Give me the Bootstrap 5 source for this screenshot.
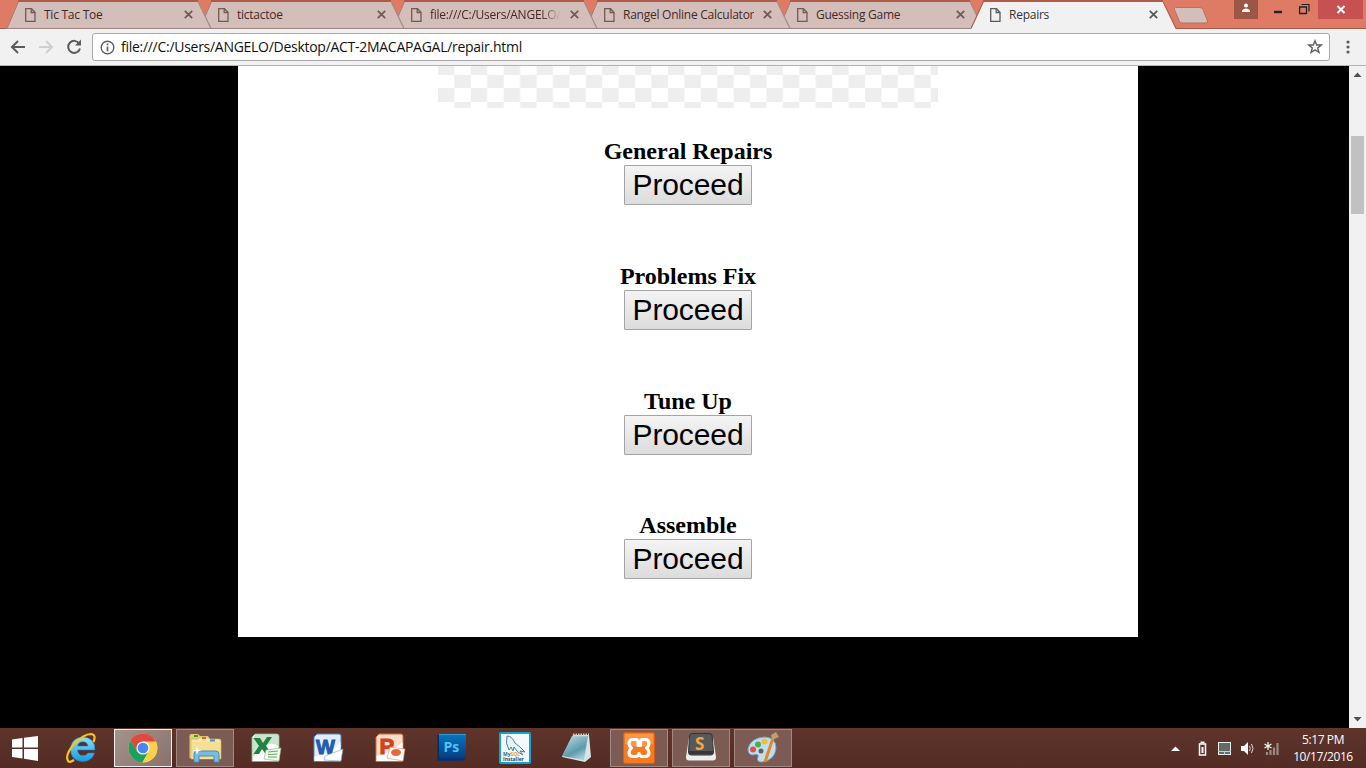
<!DOCTYPE html>
<html lang="en">
<head>
<meta charset="utf-8">
<meta name="viewport" content="width=device-width, initial-scale=1">
<title>Repairs</title>
<link href="https://cdn.jsdelivr.net/npm/bootstrap@5.3.0/dist/css/bootstrap.min.css" rel="stylesheet">
<style>
  body{width:1366px;height:768px;font-family:"Open Sans","Noto Sans",sans-serif;background:#000}
  svg{display:block;flex:none}
  .strip{height:29px;background:#df7b64;border-top:1px solid #df7b64;padding-left:7px}
  .strip::after{content:"";position:absolute;left:0;right:0;bottom:0;height:1px;background:#a25b4b}
  .tab{width:193px;height:29px;margin-top:-1px;position:relative}
  .tab .shape{position:absolute;left:-1px;top:0}
  .tab-body{position:relative;height:29px;padding:0 7px 0 18px}
  .tab-name{width:131px;margin-left:8px;font-size:12px;line-height:29px;letter-spacing:-.25px;white-space:nowrap;overflow:hidden;color:#44292a}
  .tab.active .tab-name{color:#333}
  .fade-end{-webkit-mask-image:linear-gradient(90deg,#000 85%,transparent)}
  .toolbar{height:37px;background:#f2f1f2;border-bottom:1px solid #b5b3b4;padding:4px 12px 4px 10px}
  .address{width:1238px;height:28px;margin-left:10px;border:1px solid #a9a7a8;border-radius:3px;padding:0 6px 0 7px;font-size:14px;color:#111}
  .address span{letter-spacing:-.28px;margin-left:6px;line-height:26px}
  .viewport{height:662px}
  .sheet{width:900px;height:571px;margin-left:238px;font-family:"Liberation Serif",serif;color:#000}
  .service{height:124.8px}
  .service h2{font-size:24px;line-height:27px;font-weight:700;margin:0}
  .btn-go{width:128px;height:40px;padding:0;border:1px solid #a4a4a4;border-radius:1px;background:linear-gradient(#f4f4f4,#dcdcdc);font:30px/36px "Liberation Sans",sans-serif;letter-spacing:-.1px;color:#000}
  .scroll{width:17px;background:#f1f1f1}
  .thumb{width:13px;height:78px;background:#c1c1c1;margin-top:53px}
  .taskbar{height:40px;background:linear-gradient(#5e342b,#542c24);color:#fff}
  .start{width:52px}
  .slot{width:58px;height:38px;margin-right:4px}
  .slot.office{padding-right:2px}
  .slot.open{background:#7b5b53;border:1px solid #a28880}
  .slot.current{background:linear-gradient(135deg,#a3938e,#8a7169);border:1px solid #f2efee}
  .clock{width:70px;font-size:12px;line-height:17px;letter-spacing:-.4px;text-align:center}
  .win-close{width:45px;height:19px;background:#c75050}
  .user{width:24px;height:19px;background:#9c5646}
  .controls{position:absolute;left:1234px;top:-1px}
</style>
<script src="https://cdn.jsdelivr.net/npm/bootstrap@5.3.0/dist/js/bootstrap.bundle.min.js"></script>
</head>
<body class="overflow-hidden d-flex flex-column">
<svg width="0" height="0" class="position-absolute">
  <defs>
    <g id="tabshape"><path d="M1 28.5 L12.5 1.5 H192 L205 28.5Z" fill="#d4beb9"/><path d="M0 28.5H205" stroke="#9d8580"/><path d="M1 28.5 L12.5 1.5" fill="none" stroke="#a77a70"/><path d="M12 1H192" stroke="#b05b4a" stroke-width="2"/><path d="M192 1.5 L205 28.5" fill="none" stroke="#a58a84" stroke-width="1.2"/></g>
    <g id="doc" fill="none" stroke="currentColor" stroke-width="1.3"><path d="M.7.7H6.5L10 4.2V13.3H.7Z"/><path d="M6.2.8V4.5H10"/></g>
    <path id="cross" d="M.8.8 8.2 8.2M8.2.8.8 8.2" stroke="currentColor" stroke-width="1.8"/>
  </defs>
</svg>

<header class="strip d-flex position-relative flex-shrink-0">
  <div class="tab" style="z-index:5"><svg class="shape" width="207" height="29"><use href="#tabshape"/></svg><div class="tab-body d-flex align-items-center" style="color:#735a57"><svg width="11" height="14"><use href="#doc"/></svg><span class="tab-name">Tic Tac Toe</span><svg class="ms-auto" width="9" height="9"><use href="#cross"/></svg></div></div>
  <div class="tab" style="z-index:4"><svg class="shape" width="207" height="29"><use href="#tabshape"/></svg><div class="tab-body d-flex align-items-center" style="color:#735a57"><svg width="11" height="14"><use href="#doc"/></svg><span class="tab-name">tictactoe</span><svg class="ms-auto" width="9" height="9"><use href="#cross"/></svg></div></div>
  <div class="tab" style="z-index:3"><svg class="shape" width="207" height="29"><use href="#tabshape"/></svg><div class="tab-body d-flex align-items-center" style="color:#735a57"><svg width="11" height="14"><use href="#doc"/></svg><span class="tab-name fade-end">file:///C:/Users/ANGELO/</span><svg class="ms-auto" width="9" height="9"><use href="#cross"/></svg></div></div>
  <div class="tab" style="z-index:2"><svg class="shape" width="207" height="29"><use href="#tabshape"/></svg><div class="tab-body d-flex align-items-center" style="color:#735a57"><svg width="11" height="14"><use href="#doc"/></svg><span class="tab-name">Rangel Online Calculator</span><svg class="ms-auto" width="9" height="9"><use href="#cross"/></svg></div></div>
  <div class="tab" style="z-index:1"><svg class="shape" width="207" height="29"><use href="#tabshape"/></svg><div class="tab-body d-flex align-items-center" style="color:#735a57"><svg width="11" height="14"><use href="#doc"/></svg><span class="tab-name">Guessing Game</span><svg class="ms-auto" width="9" height="9"><use href="#cross"/></svg></div></div>
  <div class="tab active" style="z-index:6"><svg class="shape" width="207" height="29"><path d="M0 29 L12.5 1 H192 L205 29Z" fill="#f2f1f2"/><path d="M0 28.5 L12.5 1.5M192 1.5 L205 28.5" stroke="#a86353" stroke-width="1.2"/><path d="M12 1H192" stroke="#b05b4a" stroke-width="2"/></svg><div class="tab-body d-flex align-items-center" style="color:#5a5a5a"><svg width="11" height="14"><use href="#doc"/></svg><span class="tab-name">Repairs</span><svg class="ms-auto" width="9" height="9"><use href="#cross"/></svg></div></div>
  <svg width="36" height="20" style="margin:5px 0 0 8px"><path d="M2.500 1.500H27Q29 1.500 30 3.500L34.500 15Q35 17 33 17H9Q7 17 6.200 15L1.500 3.500Q1 1.500 2.500 1.500Z" fill="#d4beb9" stroke="#b57264"/></svg>
  <div class="controls d-flex">
    <div class="user"><svg width="24" height="19"><circle cx="12" cy="5.500" r="2" fill="#fff"/><path d="M8 12V10.500Q12 6.500 16 10.500V12Z" fill="#fff"/></svg></div>
    <svg width="60" height="19"><path d="M16 12H24" stroke="#222" stroke-width="2.400"/><g transform="translate(41 3.500)" fill="none" stroke="#222"><path d="M.6 3.500H7.500V10H.6Z" stroke-width="1.300"/><path d="M2.500 1H10V8" stroke-width="1.200"/></g></svg>
    <div class="win-close"><svg width="45" height="19"><path d="M19.500 6 26.500 13M26.500 6 19.500 13" stroke="#fff" stroke-width="2"/></svg></div>
  </div>
</header>

<nav class="toolbar d-flex align-items-center flex-shrink-0">
  <svg width="72" height="20" fill="none" stroke-width="2"><path d="M15 10H2.500M8 4 2 10 8 16" stroke="#5b5b5b"/><path d="M29 10H41.500M36 4 42 10 36 16" stroke="#cfcfcf"/><path d="M69.200 6.500A6 6 0 1 0 70 11.500" stroke="#5b5b5b"/><path d="M71 2.500V8.500H65Z" fill="#5b5b5b"/></svg>
  <div class="address bg-white d-flex align-items-center">
    <svg width="15" height="15" fill="none" stroke="#5f5f5f"><circle cx="7.500" cy="7.500" r="6.300" stroke-width="1.400"/><path d="M7.500 6.500V11.200M7.500 3.600V5.300" stroke-width="1.700"/></svg>
    <span>file:///C:/Users/ANGELO/Desktop/ACT-2MACAPAGAL/repair.html</span>
    <svg class="ms-auto" width="16" height="16"><path d="M8 1.800 9.700 6H14.200L10.700 9 12 13.500 8 10.900 4 13.500 5.300 9 1.800 6H6.300Z" fill="none" stroke="#5f5f5f" stroke-width="1.400"/></svg>
  </div>
  <svg width="6" height="16" class="ms-auto" style="margin-right:3px"><g fill="#5b5b5b"><circle cx="3" cy="3" r="1.600"/><circle cx="3" cy="8" r="1.600"/><circle cx="3" cy="13" r="1.600"/></g></svg>
</nav>

<div class="viewport d-flex bg-black flex-shrink-0">
  <main class="sheet bg-white text-center">
    <svg class="mx-auto" width="500" height="42"><defs><pattern id="chk" width="32.850" height="27" y="-5" patternUnits="userSpaceOnUse"><path d="M0 0H16.400V14H0ZM16.400 14H32.850V27H16.400Z" fill="#eee"/></pattern></defs><rect width="500" height="42" fill="url(#chk)"/></svg>
    <div style="padding-top:30px">
      <section class="service"><h2>General Repairs</h2><button class="btn btn-go d-block mx-auto">Proceed</button></section>
      <section class="service"><h2>Problems Fix</h2><button class="btn btn-go d-block mx-auto">Proceed</button></section>
      <section class="service"><h2>Tune Up</h2><button class="btn btn-go d-block mx-auto">Proceed</button></section>
      <section class="service"><h2>Assemble</h2><button class="btn btn-go d-block mx-auto">Proceed</button></section>
    </div>
  </main>
  <div class="scroll ms-auto d-flex flex-column align-items-center">
    <svg width="17" height="17"><path d="M4.500 11 8.500 6.500 12.500 11Z" fill="#505050"/></svg>
    <div class="thumb"></div>
    <svg width="17" height="17" class="mt-auto"><path d="M4.500 6 8.500 10.500 12.500 6Z" fill="#505050"/></svg>
  </div>
</div>

<footer class="taskbar d-flex align-items-center flex-shrink-0">
  <div class="start"><svg width="52" height="30"><path d="M12 6.500 22.500 5V14.500H12ZM24 4.800 38 3V14.500H24ZM12 16H22.500V25.500L12 24ZM24 16H38V28L24 25.800Z" fill="#fff"/></svg></div>
  <div class="slot d-flex align-items-center justify-content-center">
    <svg width="32" height="32"><defs><linearGradient id="ie" x2="0" y2="1"><stop stop-color="#8be0fb"/><stop offset="1" stop-color="#1b9ae0"/></linearGradient></defs><path d="M30 18H12.500Q13 23.500 18 23.500 21.500 23.500 23 21H29.500Q27 29.500 17.500 29.500 6 29 5.500 17.500 6 6 17.500 5 30 5.500 30 18ZM12.600 14H23Q22 9.800 18 9.800 13.500 9.800 12.600 14Z" fill="url(#ie)" fill-rule="evenodd" stroke="#1485c8" stroke-width=".6"/><path d="M28.500 10Q31.500 2.500 26 2 19 2 9 12-1 24 3.500 29.500 5.500 30.500 9 28" fill="none" stroke="#f6c51e" stroke-width="2.200"/></svg>
  </div>
  <div class="slot current d-flex align-items-center justify-content-center">
    <svg width="30" height="30" viewBox="0 0 30 30"><circle cx="15" cy="15" r="14.500" fill="#fcd04d"/><path d="M2.440 7.750A14.500 14.500 0 0 0 14.500 29.500L20.500 18.500 15 21 9.400 18.300Z" fill="#1aa260"/><path d="M15 8.500H28Q31 16 27 23 23 29 14.500 29.500L20.800 18Z" fill="#fcd04d"/><path d="M2.440 7.750A14.500 14.500 0 0 1 28 8.500H15L9 18Z" fill="#dc4b3e"/><circle cx="15" cy="15" r="6.600" fill="#f3f3f3"/><circle cx="15" cy="15" r="5.300" fill="#4a86ee"/></svg>
  </div>
  <div class="slot open d-flex align-items-center justify-content-center">
    <svg width="34" height="32"><path d="M1.500 4Q1.500 2 3.500 2H10L12 4H20L22 7V26H1.500Z" fill="#e5cc78"/><path d="M3 7H10L12 5H19L22 7H31Q33 7 33 9V27H3Z" fill="#f8e8a7" stroke="#d2ac4f" stroke-width=".7"/><path d="M4 10H32V27H4Z" fill="#f5df93"/><path d="M6 3H10V5H6Z" fill="#29ad28"/><path d="M14 5H18V7H14Z" fill="#e35a3a"/><path d="M22 7.500H27V9.500H22Z" fill="#3596e4"/><path d="M6 30V22Q6 19 9 19H28Q31 19 31 22V30H26V24H11V30Z" fill="#7abbe2" stroke="#4a8cb9"/><path d="M9 14 10 17.500 13.500 18.500 10 19.500 9 23 8 19.500 4.500 18.500 8 17.500Z" fill="#fff"/></svg>
  </div>
  <div class="slot office d-flex align-items-center justify-content-center">
    <svg width="32" height="32"><path d="M5 2H27Q29 2 29 4V28Q29 29.500 27 29.500H2V5Z" fill="#fff" stroke="#71ae79"/><path d="M5 3H28V14Q18 6 3 25V6Z" fill="#cce3cd"/><path d="M3.500 6H10L13 11 17 5H22L16 14 22 22H15.500L12 17 9 22H3.500L9 14Z" fill="#238442"/><path d="M16 18 31 16 29 29 14 27Z" fill="#f3fbef" stroke="#80b681" stroke-width=".6"/><path d="M18 20 28 19M18 22.500 27.500 22M18 25 27 25" stroke="#64a969"/></svg>
  </div>
  <div class="slot office d-flex align-items-center justify-content-center">
    <svg width="32" height="32"><path d="M5 2H27Q29 2 29 4V28Q29 29.500 27 29.500H2V5Z" fill="#e2eefb" stroke="#4a85c9"/><path d="M2.500 24Q14 26 28.500 10V29H2.500Z" fill="#fff"/><text x="4" y="21.500" font-family="Liberation Sans" font-size="20" font-weight="700" fill="#215cae" stroke="#215cae">W</text><path d="M13 24 31 17 29 29 12 28Z" fill="#fff" stroke="#6c9cce" stroke-width=".6"/></svg>
  </div>
  <div class="slot office d-flex align-items-center justify-content-center">
    <svg width="32" height="32"><path d="M5 2H27Q29 2 29 4V28Q29 29.500 27 29.500H2V5Z" fill="#fbdccc" stroke="#db653c"/><path d="M2.500 24Q14 22 28.500 10V29H2.500Z" fill="#fff"/><text x="5.500" y="21.500" font-family="Liberation Sans" font-size="22" font-weight="700" fill="#cd451b" stroke="#cd451b">P</text><path d="M16 15 31 17 29 29 13 26Z" fill="#fff" stroke="#e68762" stroke-width=".6"/><ellipse cx="22" cy="20.500" rx="5" ry="3.500" fill="#e66a3e"/></svg>
  </div>
  <div class="slot office d-flex align-items-center justify-content-center">
    <svg width="32" height="32"><defs><linearGradient id="ps" x2="0" y2="1"><stop stop-color="#0876bd"/><stop offset="1" stop-color="#073e86"/></linearGradient></defs><path d="M1.500 3 5 2V26L1.500 29Z" fill="#012e60"/><path d="M3 2H30V26H3Z" fill="url(#ps)"/><path d="M3 2.500H30" stroke="#2b9bdb"/><path d="M1.500 29 4 26H30L28 28.500Z" fill="#063470"/><text x="7.500" y="20" font-family="Open Sans" font-weight="700" font-size="14" fill="#50c5f4">Ps</text></svg>
  </div>
  <div class="slot d-flex align-items-center justify-content-center">
    <svg width="32" height="32"><rect x="1" y="1" width="30" height="30" rx="1" fill="#f4fafc" stroke="#14a2cf" stroke-width="2"/><path d="M8 4Q13 4 16 11L21 15 26 20 21 19 24 23Q18 21 15 15L14 19 12 15 10 18Q6 11 8 4Z" fill="#e5f2f8" stroke="#47829c"/><text x="4" y="24" font-family="Open Sans" font-size="5" font-weight="700" fill="#29718a">My<tspan fill="#e7a026">SQL</tspan></text><text x="4" y="28.500" font-family="Open Sans" font-size="5" font-weight="700" fill="#224b69">Installer</text></svg>
  </div>
  <div class="slot office d-flex align-items-center justify-content-center">
    <svg width="32" height="32"><path d="M13 3H29L31 25 25 30 2 25Z" fill="#d8e5e7"/><defs><linearGradient id="np" x2=".6" y2="1"><stop stop-color="#c1e1e7"/><stop offset=".7" stop-color="#5d9aac"/><stop offset="1" stop-color="#a6cad2"/></linearGradient></defs><path d="M12 4H28L24 28 2 24Z" fill="url(#np)"/><path d="M13 3H29" stroke="#d6d5c9" stroke-width="3" stroke-dasharray="1.500 1"/></svg>
  </div>
  <div class="slot open d-flex align-items-center justify-content-center">
    <svg width="32" height="32"><rect x=".5" y=".5" width="31" height="31" rx="2" fill="#f47b22" stroke="#d85e0c"/><path d="M2 2H30V12Q16 17 2 12Z" fill="#fb9649"/><path d="M10 7.500H13Q15 7.500 15 10V13.500H17.500V10Q17.500 7.500 20 7.500H22Q26 7.500 26 11.500 26 14 23.500 16 26 18 26 20.500 26 24.500 22 24.500H19Q16.500 24 16 21.500 15.500 24.500 12.500 24.500H10Q6 24.500 6 20.500 6 18 8.500 16 6 14 6 11.500 6 7.500 10 7.500Z" fill="none" stroke="#fff" stroke-width="3.200" stroke-linejoin="round"/></svg>
  </div>
  <div class="slot open d-flex align-items-center justify-content-center">
    <svg width="32" height="32"><path d="M4 5H28L31 25Q31 28.500 28 28.500H4Q1 28.500 1 25Z" fill="#eee"/><path d="M7 1.500H25Q27 1.500 27.200 4L28.500 20Q28.500 23 26 23H6Q3.500 23 3.500 20L4.500 4Q5 1.500 7 1.500Z" fill="#585858" stroke="#333"/><path d="M4 19H28V22H4Z" fill="#373737"/><text x="10" y="17.500" font-family="Open Sans" font-size="17" font-weight="700" fill="#f5a443">S</text></svg>
  </div>
  <div class="slot open d-flex align-items-center justify-content-center">
    <svg width="32" height="32"><path d="M18 5Q29 6 29 16 28 28 15 30 9 30 11 25 12 21 6 23 1 23 1 17 3 6 18 5Z" fill="#bfdff0" stroke="#71a9c8"/><circle cx="14" cy="19" r="2.500" fill="#705a54"/><circle cx="6" cy="17.500" r="3" fill="#e44f41"/><circle cx="11" cy="12.500" r="3" fill="#4fae4b"/><circle cx="17.500" cy="9.500" r="3" fill="#f1bd3f"/><path d="M26 6 18 30" stroke="#e48826" stroke-width="3"/><path d="M25 8 24 3 29 0 32 5Z" fill="#c79b6b"/></svg>
  </div>
  <svg class="ms-auto" width="114" height="20" style="margin-right:4px"><path d="M1 13 5.500 8.500 10 13Z" fill="#fff"/><path d="M29.500 6H35.500V17H29.500Z" fill="none" stroke="#fff" stroke-width="1.500"/><path d="M30.500 4.500H34.500" stroke="#fff" stroke-width="2"/><path d="M31.500 9H33.500V15H31.500Z" fill="#fff"/><rect x="48.500" y="4.500" width="12" height="12" fill="#666b6a" stroke="#e8efef"/><path d="M48 13.500H61M54.500 13.500V17" stroke="#c4d0d2"/><path d="M71 8H74L78 4V17L74 13H71Z" fill="#fff"/><path d="M79.500 8Q81 10.500 79.500 13M81.500 6Q84.500 10.500 81.500 15" fill="none" stroke="#ddd"/><path d="M97 14V17M100.500 12V17M104 9.500V17M107.500 5V17" stroke="#9b8984" stroke-width="2.200"/><path d="M98 4V12M94.500 6 101.500 10M101.500 6 94.500 10" stroke="#fff" stroke-width="1.200"/></svg>
  <div class="clock" style="margin-right:8px">5:17 PM<br>10/17/2016</div>
</footer>
</body>
</html>
